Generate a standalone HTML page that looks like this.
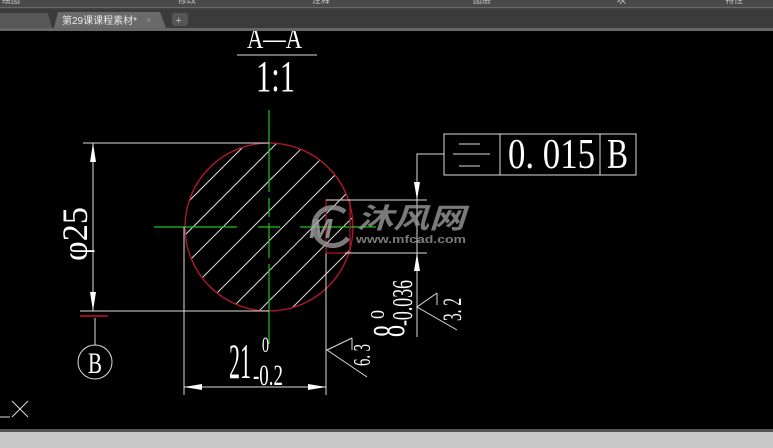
<!DOCTYPE html>
<html><head><meta charset="utf-8"><style>
html,body{margin:0;padding:0;background:#000;width:773px;height:448px;overflow:hidden}
svg{display:block}
text{font-family:"Liberation Serif","DejaVu Serif",serif;fill:#fff}
</style></head><body>
<svg width="773" height="448" viewBox="0 0 773 448">
<rect x="0" y="0" width="773" height="8" fill="#4a4a4a"/>
<g>
<text x="2" y="3" style="font-family:'Liberation Sans','Noto Sans CJK SC',sans-serif;fill:#ccc;font-size:9px">绘图</text>
<text x="178" y="3" style="font-family:'Liberation Sans','Noto Sans CJK SC',sans-serif;fill:#ccc;font-size:9px">修改</text>
<text x="312" y="3" style="font-family:'Liberation Sans','Noto Sans CJK SC',sans-serif;fill:#ccc;font-size:9px">注释</text>
<text x="473" y="3" style="font-family:'Liberation Sans','Noto Sans CJK SC',sans-serif;fill:#ccc;font-size:9px">图层</text>
<text x="617" y="3" style="font-family:'Liberation Sans','Noto Sans CJK SC',sans-serif;fill:#ccc;font-size:9px">块</text>
<text x="725" y="3" style="font-family:'Liberation Sans','Noto Sans CJK SC',sans-serif;fill:#ccc;font-size:9px">特性</text>
</g>
<line x1="0" y1="8" x2="773" y2="8" stroke="#888"/>
<rect x="0" y="9" width="773" height="19" fill="#3b3b3b"/>
<path d="M0 13 H48 L52 28 H0Z" fill="#575757"/>
<path d="M54 28 L58 12 H160 L166 28Z" fill="#6a6a6a"/>
<text x="62" y="24" style="font-family:'Liberation Sans','Noto Sans CJK SC',sans-serif;font-size:10px;fill:#e8e8e8">第29课课程素材*</text>
<text x="146" y="23" style="font-family:'Liberation Sans',sans-serif;font-size:9px;fill:#999">×</text>
<rect x="172" y="13" width="16" height="13" rx="3" fill="#555"/>
<text x="175.5" y="24" style="font-family:'Liberation Sans',sans-serif;font-size:11px;fill:#bbb">+</text>
<rect x="0" y="28" width="773" height="3" fill="#666"/>

<!-- title -->
<text x="247" y="48" style="font-size:30px" textLength="55" lengthAdjust="spacingAndGlyphs">A—A</text>
<rect x="0" y="28" width="773" height="3" fill="#666"/>
<line x1="237" y1="55" x2="317" y2="55" stroke="#ddd"/>
<text x="256" y="91" style="font-size:44px" textLength="39" lengthAdjust="spacingAndGlyphs">1:1</text>

<!-- hatch -->
<defs><clipPath id="c"><circle cx="269" cy="227" r="84"/></clipPath></defs>
<g clip-path="url(#c)" stroke="#ddd" stroke-width="1">
<line x1="100" y1="320" x2="300" y2="120"/>
<line x1="120" y1="330" x2="320" y2="130"/>
<line x1="140" y1="340" x2="340" y2="140"/>
<line x1="160" y1="350" x2="360" y2="150"/>
<line x1="180" y1="360" x2="380" y2="160"/>
<line x1="200" y1="370" x2="400" y2="170"/>
<line x1="220" y1="380" x2="420" y2="180"/>
<line x1="240" y1="390" x2="440" y2="190"/>
<line x1="80" y1="310" x2="280" y2="110"/>
<line x1="60" y1="300" x2="260" y2="100"/>
</g>
<circle cx="269" cy="227" r="84" fill="none" stroke="#b3182a" stroke-width="1.3"/>
<g stroke="#1fc21f" stroke-width="1.2">
<line x1="269" y1="110" x2="269" y2="192"/>
<line x1="269" y1="198" x2="269" y2="217"/>
<line x1="269" y1="223" x2="269" y2="258"/>
<line x1="269" y1="264" x2="269" y2="344"/>
<line x1="154" y1="227" x2="237" y2="227"/>
<line x1="258" y1="227" x2="280" y2="227"/>
<line x1="300" y1="227" x2="376" y2="227"/>
</g>

<g stroke="#ddd" stroke-width="1">
<line x1="83" y1="143" x2="269" y2="143"/>
<line x1="80" y1="311" x2="269" y2="311"/>
<line x1="93" y1="143" x2="93" y2="311"/>
<line x1="184" y1="227" x2="184" y2="395"/>
<line x1="326" y1="200" x2="326" y2="395"/>
<line x1="184" y1="387" x2="326" y2="387"/>
<line x1="95" y1="318" x2="95" y2="345"/>
</g>
<path d="M93 143 L90 162 L96 162Z M93 311 L90 292 L96 292Z M184 387 L202 384 L202 390Z M326 387 L308 384 L308 390Z" fill="#fff"/>
<line x1="80" y1="316" x2="108" y2="316" stroke="#c0162a" stroke-width="1.5"/>
<circle cx="95" cy="362" r="17" fill="none" stroke="#ddd"/>
<text x="88" y="373" style="font-size:30px" textLength="14" lengthAdjust="spacingAndGlyphs">B</text>
<text transform="translate(87,261) rotate(-90)" style="font-size:36px" textLength="54" lengthAdjust="spacingAndGlyphs">φ25</text>

<text x="229" y="378" style="font-size:50px" textLength="22" lengthAdjust="spacingAndGlyphs">21</text>
<text x="262" y="352" style="font-size:22px" textLength="7" lengthAdjust="spacingAndGlyphs">0</text>
<text x="253" y="385" style="font-size:30px" textLength="30" lengthAdjust="spacingAndGlyphs">-0.2</text>

<rect x="326" y="200" width="24" height="53" fill="none" stroke="#b3182a" stroke-width="1.2"/>
<g stroke="#ddd" stroke-width="1">
<line x1="326" y1="200" x2="427" y2="200"/>
<line x1="345" y1="253" x2="427" y2="253"/>
<polyline points="444,154 417,154 417,337" fill="none"/>
<rect x="444" y="134" width="192" height="41" fill="none"/>
<line x1="500" y1="134" x2="500" y2="175"/>
<line x1="600" y1="134" x2="600" y2="175"/>
<line x1="459" y1="144" x2="480" y2="144"/>
<line x1="453" y1="154" x2="490" y2="154"/>
<line x1="459" y1="166" x2="480" y2="166"/>
</g>
<path d="M417 200 L414 182 L420 182Z M417 253 L414 271 L420 271Z" fill="#fff"/>
<text x="508" y="168" style="font-size:42px" textLength="87" lengthAdjust="spacingAndGlyphs">0. 015</text>
<text x="607" y="168" style="font-size:42px" textLength="21" lengthAdjust="spacingAndGlyphs">B</text>

<g stroke="#ddd" stroke-width="1" fill="none">
<polyline points="437,293 417,307 457,330"/>
<line x1="437" y1="293" x2="437" y2="305"/>
<polyline points="352,338 327,350 367,377"/>
<line x1="352" y1="338" x2="352" y2="350"/>
</g>
<text transform="translate(461,321) rotate(-90)" style="font-size:26px" textLength="23" lengthAdjust="spacingAndGlyphs">3. 2</text>
<text transform="translate(370,366) rotate(-90)" style="font-size:24px" textLength="22" lengthAdjust="spacingAndGlyphs">6. 3</text>
<text transform="translate(404,337) rotate(-90)" style="font-size:46px" textLength="12" lengthAdjust="spacingAndGlyphs">8</text>
<text transform="translate(384,319) rotate(-90)" style="font-size:20px" textLength="9" lengthAdjust="spacingAndGlyphs">0</text>
<text transform="translate(412,326) rotate(-90)" style="font-size:28px" textLength="46" lengthAdjust="spacingAndGlyphs">-0.036</text>

<g opacity="0.8">
<path d="M345 212 A19 19 0 1 0 348 238" fill="none" stroke="#999" stroke-width="5"/>
<text x="309" y="238" style="font-family:'Liberation Sans',sans-serif;font-size:28px;font-weight:bold;font-style:italic;fill:#aaa">M</text>
<text x="357" y="228" style="font-family:'Noto Sans CJK SC',sans-serif;font-size:28px;font-weight:bold;font-style:italic;fill:#999" textLength="108" lengthAdjust="spacingAndGlyphs">沐风网</text>
<text x="356" y="243" style="font-family:'Liberation Sans',sans-serif;font-size:11px;font-weight:bold;fill:#999" textLength="110" lengthAdjust="spacingAndGlyphs">www.mfcad.com</text>
</g>

<g stroke="#ddd"><line x1="0" y1="417" x2="10" y2="417"/><line x1="12" y1="401" x2="28" y2="417"/><line x1="28" y1="401" x2="12" y2="417"/></g>

<rect x="0" y="429" width="773" height="3" fill="#555"/>
<rect x="0" y="432" width="773" height="16" fill="#c8c8c8"/>
</svg>
</body></html>
